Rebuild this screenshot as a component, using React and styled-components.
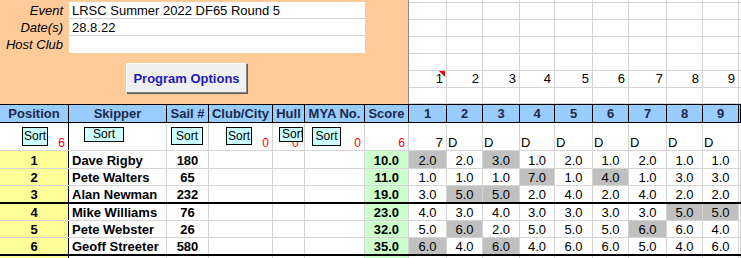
import styled, { createGlobalStyle } from "styled-components";

const GlobalStyle = createGlobalStyle`
  html, body {
    margin: 0;
    padding: 0;
    background: #fff;
  }
  body {
    font-family: "Liberation Sans", Arial, sans-serif;
    font-size: 13px;
    color: #000;
    overflow: hidden;
  }
  * {
    box-sizing: border-box;
  }
`;

const GRID = "#d4d4d4";
const RACE_WIDTHS = [38, 36, 37, 35, 38, 36, 38, 36, 36];
const COLS = `69px 98px 42px 64px 32px 60px 44px ${RACE_WIDTHS.map((w) => w + "px").join(" ")} 1fr`;
const RACE_COLS = `${RACE_WIDTHS.map((w) => w + "px").join(" ")} 1fr`;

const results = [
  { pos: 1, name: "Dave Rigby", sail: 180, score: "10.0", races: [2, 2, 3, 1, 2, 1, 2, 1, 1], drop: [0, 2] },
  { pos: 2, name: "Pete Walters", sail: 65, score: "11.0", races: [1, 1, 1, 7, 1, 4, 1, 3, 3], drop: [3, 5] },
  { pos: 3, name: "Alan Newman", sail: 232, score: "19.0", races: [3, 5, 5, 2, 4, 2, 4, 2, 2], drop: [1, 2] },
  { pos: 4, name: "Mike Williams", sail: 76, score: "23.0", races: [4, 3, 4, 3, 3, 3, 3, 5, 5], drop: [7, 8] },
  { pos: 5, name: "Pete Webster", sail: 26, score: "32.0", races: [5, 6, 2, 5, 5, 5, 6, 6, 4], drop: [1, 6] },
  { pos: 6, name: "Geoff Streeter", sail: 580, score: "35.0", races: [6, 4, 6, 4, 6, 6, 5, 4, 6], drop: [0, 2] },
];

const rowHeights = [18, 17, 18, 17, 17, 18];

const headings = ["Position", "Skipper", "Sail #", "Club/City", "Hull", "MYA No.", "Score"];

// sort buttons: offset inside the cell, size, and the red count under them
const sorters = [
  { x: 22, w: 26, h: 19, count: "6" },
  { x: 15, w: 40, h: 15 },
  { x: 4, w: 32, h: 18 },
  { x: 17, w: 26, h: 18, count: "0" },
  { x: 6, w: 24, h: 15, count: "0", clip: true },
  { x: 7, w: 29, h: 19, count: "0" },
  { count: "6" },
];

const App = () => {
  return (
    <>
      <GlobalStyle />
      <Page>
        <Top>
          <InfoPanel>
            <InfoGrid>
              <InfoLabel>Event</InfoLabel>
              <InfoValue>LRSC Summer 2022 DF65 Round 5</InfoValue>
              <InfoLabel>Date(s)</InfoLabel>
              <InfoValue>28.8.22</InfoValue>
              <InfoLabel>Host Club</InfoLabel>
              <InfoValue $last />
            </InfoGrid>
            <ProgramButton>Program Options</ProgramButton>
          </InfoPanel>
          <Sheet>
            {Array.from({ length: 7 }).map((_, r) =>
              Array.from({ length: 10 }).map((_, c) => (
                <SheetCell key={r + "-" + c} $note={r === 5 && c === 0}>
                  {r === 5 && c < 9 ? c + 1 : ""}
                </SheetCell>
              ))
            )}
          </Sheet>
        </Top>

        <HeaderRow>
          {headings.map((h, i) => (
            <HeadCell key={h} $first={i === 0}>{h}</HeadCell>
          ))}
          {RACE_WIDTHS.map((_, i) => (
            <HeadCell key={i}>{i + 1}</HeadCell>
          ))}
          <HeadCell />
        </HeaderRow>

        <SortRow>
          {sorters.map((s, i) => (
            <SortCell key={i} $first={i === 0}>
              {s.w && (
                <SortButton $x={s.x} $w={s.w} $h={s.h} $clip={s.clip}>
                  Sort
                </SortButton>
              )}
              {s.count && <Count $under={s.clip}>{s.count}</Count>}
            </SortCell>
          ))}
          {RACE_WIDTHS.map((_, i) => (
            <MarkCell key={i} $right={i === 0}>
              {i === 0 ? "7" : "D"}
            </MarkCell>
          ))}
          <MarkCell />
        </SortRow>

        {results.map((row, r) => (
          <DataRow key={row.pos} $h={rowHeights[r]} $thick={row.pos === 3 || row.pos === 6}>
            <PosCell>{row.pos}</PosCell>
            <NameCell>{row.name}</NameCell>
            <SailCell>{row.sail}</SailCell>
            <Cell />
            <Cell />
            <Cell />
            <ScoreCell>{row.score}</ScoreCell>
            {row.races.map((v, i) => (
              <RaceCell key={i} $drop={row.drop.includes(i)}>
                {v.toFixed(1)}
              </RaceCell>
            ))}
            <Cell />
          </DataRow>
        ))}

        <DataRow $h={17}>
          <PosCell />
          <Cell />
          <Cell />
          <Cell />
          <Cell />
          <Cell />
          <ScoreCell />
          {RACE_WIDTHS.map((_, i) => (
            <Cell key={i} />
          ))}
          <Cell />
        </DataRow>
      </Page>
    </>
  );
};

const Page = styled.div`
  width: 741px;
  height: 258px;
  overflow: hidden;
  background: #fff;
`;

const Top = styled.div`
  display: flex;
  height: 104px;
`;

const InfoPanel = styled.div`
  width: 409px;
  flex: none;
  background: #ffcc99;
  border-right: 1px solid #8c8c8c;
  padding-top: 2px;
`;

const InfoGrid = styled.div`
  display: grid;
  grid-template-columns: 69px 296px;
`;

const InfoLabel = styled.div`
  height: 17px;
  line-height: 17px;
  text-align: right;
  padding-right: 6px;
  font-style: italic;
`;

const InfoValue = styled.div`
  height: 17px;
  line-height: 17px;
  padding-left: 3px;
  background: #fff;
  border-bottom: ${(p) => (p.$last ? "none" : `1px solid ${GRID}`)};
  white-space: nowrap;
`;

const ProgramButton = styled.button`
  display: block;
  margin: 10px 0 0 126px;
  width: 121px;
  height: 30px;
  padding: 0;
  font-family: "Liberation Sans", Arial, sans-serif;
  font-size: 13px;
  font-weight: bold;
  color: #1c1cb4;
  background: #f0f0f0;
  border: 1px solid;
  border-color: #ffffff #8a8a8a #8a8a8a #ffffff;
  box-shadow: 1px 1px 0 #5a5a5a;
`;

const Sheet = styled.div`
  flex: 1;
  display: grid;
  grid-template-columns: ${RACE_COLS};
  grid-template-rows: 3px repeat(5, 17px) 16px;
`;

const SheetCell = styled.div`
  position: relative;
  border-right: 1px solid ${GRID};
  border-bottom: 1px solid ${GRID};
  text-align: right;
  padding-right: 3px;
  line-height: 16px;
  &::after {
    content: "";
    display: ${(p) => (p.$note ? "block" : "none")};
    position: absolute;
    top: 0;
    right: 1px;
    border-top: 6px solid #e00000;
    border-left: 6px solid transparent;
  }
`;

const HeaderRow = styled.div`
  display: grid;
  grid-template-columns: ${COLS};
  height: 19px;
  background: #99ccff;
  border-top: 1px solid #000;
  border-bottom: 1px solid #000;
`;

const HeadCell = styled.div`
  border-right: 1px solid #000;
  text-align: center;
  font-weight: bold;
  line-height: 17px;
  color: #1b2a4a;
  white-space: nowrap;
  overflow: hidden;
`;

const SortRow = styled.div`
  display: grid;
  grid-template-columns: ${COLS};
  height: 28px;
  border-bottom: 1px solid ${GRID};
`;

const SortCell = styled.div`
  display: flex;
  align-items: flex-start;
  padding-top: 4px;
  border-right: 1px solid ${(p) => (p.$first ? "#000" : GRID)};
  overflow: hidden;
`;

const SortButton = styled.div`
  position: relative;
  z-index: 1;
  flex: none;
  margin-left: ${(p) => p.$x}px;
  width: ${(p) => p.$w}px;
  height: ${(p) => p.$h}px;
  background: #ccffff;
  border: 1px solid #000;
  font-size: 12px;
  line-height: ${(p) => (p.$clip ? 12 : p.$h - 2)}px;
  text-align: ${(p) => (p.$clip ? "left" : "center")};
  padding-left: ${(p) => (p.$clip ? 2 : 0)}px;
  white-space: nowrap;
  overflow: hidden;
`;

const Count = styled.span`
  align-self: flex-end;
  margin-left: ${(p) => (p.$under ? "-11px" : "auto")};
  padding-right: 3px;
  color: #ff0000;
  font-size: 12px;
  line-height: 14px;
`;

const MarkCell = styled.div`
  display: flex;
  align-items: flex-end;
  justify-content: ${(p) => (p.$right ? "flex-end" : "flex-start")};
  padding: 0 3px 0 1px;
  border-right: 1px solid ${GRID};
  line-height: 15px;
`;

const DataRow = styled.div`
  display: grid;
  grid-template-columns: ${COLS};
  height: ${(p) => p.$h}px;
  border-bottom: ${(p) => (p.$thick ? "2px solid #000" : `1px solid ${GRID}`)};
`;

const Cell = styled.div`
  display: flex;
  align-items: flex-end;
  justify-content: center;
  border-right: 1px solid ${GRID};
  line-height: 15px;
  white-space: nowrap;
  overflow: hidden;
`;

const PosCell = styled(Cell)`
  background: #ffff99;
  border-right-color: #000;
  font-weight: bold;
`;

const NameCell = styled(Cell)`
  justify-content: flex-start;
  padding-left: 3px;
  font-weight: bold;
`;

const SailCell = styled(Cell)`
  font-weight: bold;
`;

const ScoreCell = styled(Cell)`
  justify-content: flex-end;
  padding-right: 9px;
  background: #ccffcc;
  font-weight: bold;
`;

const RaceCell = styled(Cell)`
  background: ${(p) => (p.$drop ? "#c0c0c0" : "#fff")};
`;

export default App;
